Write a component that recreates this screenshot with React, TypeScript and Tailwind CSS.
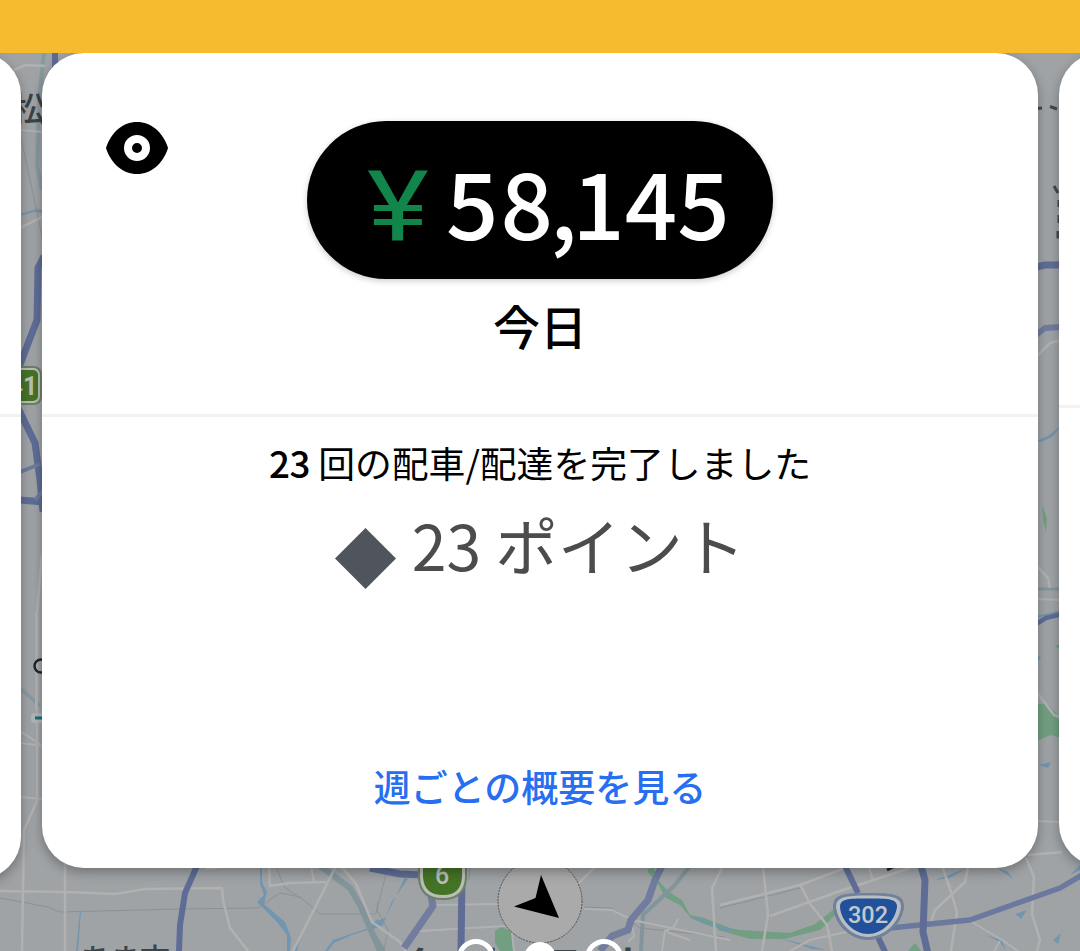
import clsx from 'clsx';

interface Road {
  d: string;
  width: number;
  color?: string;
}

const HIGHWAY = '#5f6d96';
const HIGHWAY_LIGHT = '#717c9f';

const minorRoads: Road[] = [
  // left gap
  { d: 'M14 70 L26 65 L45 66', width: 2.5 },
  { d: 'M20 130 L44 132', width: 2 },
  { d: 'M20 228 L44 216', width: 2 },
  { d: 'M42 555 L37 612 L37 801 L24 830 L22 951', width: 2.5 },
  { d: 'M36 612 V710', width: 2 },
  { d: 'M20 731 L40 744 M20 743 L44 746 M20 797 L44 799', width: 2 },
  // below the card, left part
  { d: 'M0 891 L65 892 L115 894 L145 889 L222 888 L223 900 L230 928 L248 951', width: 2.5 },
  { d: 'M65 862 V951', width: 2.5 },
  { d: 'M206 869 L234 866', width: 2 },
  { d: 'M269 866 L270 886 L290 883 L326 882', width: 2.5 },
  { d: 'M311 866 L314 882', width: 2 },
  { d: 'M336 866 L293 951', width: 2.5 },
  { d: 'M341 866 L356 884 L372 922 L400 942 L406 951', width: 2.5 },
  // middle part
  { d: 'M436 905 L498 904 M420 931 L505 926 M512 932 L514 951', width: 2 },
  { d: 'M596 866 L578 884', width: 2 },
  { d: 'M584 909 L612 910 L632 920 L730 940', width: 2 },
  { d: 'M722 868 L712 888 L714 920 L716 951', width: 2.5 },
  { d: 'M678 919 L674 927 L665 931 L662 951 M667 932 L690 940', width: 2 },
  { d: 'M632 925 L634 936 L628 942', width: 2 },
  // right part
  { d: 'M720 905 L800 885 L845 868', width: 2.5 },
  { d: 'M763 866 L768 915 L762 951', width: 2.5 },
  { d: 'M770 916 L840 891 L910 868', width: 2.5 },
  { d: 'M800 884 L810 904 L827 925 L832 951', width: 2.5 },
  { d: 'M790 951 L810 940 L850 931', width: 2 },
  { d: 'M869 868 L873 880', width: 2 },
  { d: 'M942 866 L951 892 L957 912 L951 951', width: 2.5 },
  { d: 'M968 868 L965 882 L935 910 L930 925', width: 2.5 },
  { d: 'M972 922 L1002 940 L1018 951 M1000 941 L994 951', width: 2 },
  { d: 'M1026 858 L1034 877 L1032 914 L1040 940 L1037 951', width: 2.5 },
  { d: 'M1028 855 L1062 852', width: 2.5 },
  // right gap
  { d: 'M1036 357 L1050 343 L1062 340', width: 2.5 },
  { d: 'M1036 565 L1048 578 L1050 588', width: 2.5 },
  { d: 'M1036 599 L1062 600', width: 2 },
  { d: 'M1036 691 L1054 715 L1062 718', width: 2.5 },
  { d: 'M1036 821 L1062 822', width: 2 },
];

const railways: string[] = [
  'M21 138 L45 250',
  'M0 898 L48 907 L60 912 L180 909 L258 908 L280 893 L300 897 L320 914 L376 914 L378 902',
  'M276 866 L284 887 L300 898',
  'M720 908 L800 888',
  'M388 866 L377 910 L388 930 L384 951',
  'M470 866 L469 880',
  'M584 907 L612 908 L640 928 L725 937',
];

const canals: Road[] = [
  { d: 'M44 53 L39 100 L37 165 L42 190', width: 4, color: '#879aa0' },
  { d: 'M20 688 L40 706', width: 3.5, color: '#8799a5' },
  { d: 'M320 866 L350 888 L360 905 L380 951', width: 6, color: '#82959a' },
  { d: 'M690 866 L675 885 L643 915 L641 951', width: 4, color: '#82959a' },
  { d: 'M370 928 L384 951', width: 4, color: '#82959a' },
  { d: 'M1036 589 L1062 589', width: 3, color: '#82959a' },
];

const highways: Road[] = [
  { d: 'M55 50 V75', width: 6 },
  { d: 'M44 256 L38 268 L37 320 L16 375', width: 7 },
  { d: 'M18 408 L35 443 L40 480 L43 512', width: 7 },
  { d: 'M20 500 L44 502', width: 7 },
  { d: 'M20 472 L40 464 M35 500 L44 490', width: 4, color: '#6d7b9f' },
  { d: 'M197 866 L185 893 L180 925 L179 951', width: 6 },
  { d: 'M370 868 L400 874 L422 875', width: 7 },
  { d: 'M430 890 L433 906 L404 948', width: 7, color: HIGHWAY_LIGHT },
  { d: 'M462 875 L461 951', width: 7 },
  { d: 'M662 866 L655 880 L648 900 L631 920 L628 930 L612 936 L600 951', width: 7, color: HIGHWAY_LIGHT },
  { d: 'M540 940 V951', width: 8 },
  { d: 'M845 866 L858 893 M877 935 L886 954', width: 6 },
  { d: 'M890 928 L930 924 L970 920 L1060 888 L1082 875', width: 5.5, color: '#6c799f' },
  { d: 'M921 866 L925 880 L923 932 L928 954', width: 7 },
  { d: 'M1036 267 L1045 265 L1062 265', width: 7 },
  { d: 'M1036 335 L1045 328 L1062 327', width: 6, color: HIGHWAY_LIGHT },
  { d: 'M1036 624 L1046 618 L1062 614', width: 4.5 },
];

const rivers: string[] = [
  'M20 214 L36 209 L43 210 L43 213 L34 212 L20 216 Z',
  'M260 866 L262 866 L262 882 L267 892 L264 904 L285 922 L291 938 L290 951 L287 951 L287 935 L277 922 L257 902 L264 895 L260 884 Z',
  'M80 911 L81 911 L78 951 L76 951 Z',
  'M294 951 L301 934 L297 951 Z',
  'M325 951 L333 940 L366 929 L378 919 L380 926 L352 935 L334 943 L328 951 Z',
  'M405 877 L408 879 L391 903 L383 925 L374 929 L376 922 L386 917 Z',
  'M694 917 L730 929 L730 932 L694 919 Z',
  'M720 926 L735 931 L720 929 Z',
  'M780 938 L826 950 L812 949 Z',
  'M935 880 L967 868 L950 878 Z',
  'M997 868 L1007 871 L1013 879 Z',
  'M1015 914 L1027 910 L1021 919 Z',
  'M1053 940 L1061 933 L1058 944 Z',
  'M986 935 L1002 940 L1006 951 L1000 942 Z',
  'M1036 441 L1048 436 L1062 425 L1052 437 L1041 442 Z',
  'M1036 616 L1062 610 L1062 613 L1036 618 Z',
  'M1036 653 L1041 658 L1036 662 Z',
  'M1039 765 L1051 762 L1048 768 Z',
  'M1070 875 L1080 865 L1080 870 Z',
];

const parks: string[] = [
  'M495 931 L501 927 L511 931 L513 951 L500 951 L495 943 Z',
  'M648 869 L654 868 L658 880 L669 892 L682 900 L690 915 L704 918 L735 930 L735 934 L704 924 L691 918 L680 905 L666 898 L659 886 L648 872 Z',
  'M718 926 L740 930 L790 933 L815 924 L833 910 L837 913 L820 930 L784 939 L750 939 L718 930 Z',
  'M908 951 L915 943 L921 951 Z',
  'M1042 505 L1047 518 L1046 532 L1043 520 Z',
  'M1036 704 L1047 704 L1060 717 L1060 738 L1051 735 L1036 741 Z',
  'M1055 646 L1060 644 L1060 650 Z',
];

function Lines({ roads, color }: { roads: Road[]; color: string }) {
  return (
    <g fill="none" strokeLinejoin="round">
      {roads.map((road) => (
        <path key={road.d} d={road.d} stroke={road.color ?? color} strokeWidth={road.width} />
      ))}
    </g>
  );
}

function MapBackground() {
  return (
    <svg className="absolute inset-0 h-full w-full" viewBox="0 0 1080 951" fontFamily="Noto Sans CJK JP, sans-serif">
      {parks.map((d) => (
        <path key={d} d={d} fill="#729f82" />
      ))}
      {rivers.map((d) => (
        <path key={d} d={d} fill="#7295b0" />
      ))}
      <Lines roads={canals} color="#82959a" />
      <g fill="none" stroke="#8b9195" strokeWidth="1">
        {railways.map((d) => (
          <path key={d} d={d} />
        ))}
      </g>
      <Lines roads={minorRoads} color="#b1b1b1" />
      <Lines roads={highways} color={HIGHWAY} />

      {/* Place names */}
      <g fill="#3b4248">
        <text x="12" y="121" fontSize="33" fontWeight="500">松</text>
        <text x="80" y="970" fontSize="30" fontWeight="500">あま市</text>
        <text x="404" y="982" fontSize="40" fontWeight="700" letterSpacing="28">名古屋市</text>
      </g>
      <path d="M1037 108.500 L1042 108 M1050 106.500 L1057 109 M1054 186 L1058 193 M1059 200 V207 M1059 215 V223 M1058 231 V237 L1062 237" fill="none" stroke="#45494c" strokeWidth="3" />

      {/* Stations */}
      <circle cx="41" cy="666" r="6.500" fill="none" stroke="#222526" strokeWidth="2.500" />
      <rect x="31" y="713" width="16" height="10" rx="4" fill="#b2b5b6" />
      <path d="M35 718 H47" stroke="#12707c" strokeWidth="3" />
      <path d="M887 870 L895 866" stroke="#222526" strokeWidth="3" />

      {/* Route shields */}
      <g fontFamily="Roboto, sans-serif" fontWeight="500" textAnchor="middle">
        <rect x="3" y="366" width="39" height="39" rx="8" fill="#6f8069" />
        <rect x="5" y="368" width="35" height="35" rx="6.500" fill="#b9beb9" />
        <rect x="7" y="370" width="31" height="31" rx="5" fill="#457326" />
        <text x="23" y="395" fontSize="25" fontWeight="700" fill="#b9beb9">41</text>

        <path d="M418 850 H467 V878 Q466 900 443 900 Q419 900 418 878 Z" fill="#6f8069" />
        <path d="M420 850 H465 V877 Q464 898 443 898 Q421 898 420 877 Z" fill="#b9beb9" />
        <path d="M423 850 H462 V877 Q461 895 443 895 Q424 895 423 877 Z" fill="#457326" />
        <text x="442" y="884" fontSize="25" fill="#b9beb9">6</text>

        <path d="M868 893 C894 893 904 894 904 907 C902 924 886 940 868 940 C850 940 834 924 833 907 C833 894 843 893 868 893 Z" fill="#71809b" />
        <path d="M868 895.500 C892 895.500 901 897 901 907 C899 923 884 937 868 937 C852 937 838 923 836 907 C836 897 845 895.500 868 895.500 Z" fill="#b9bec3" />
        <path d="M868 898.500 C890 898.500 897 899 897 907 C895 921 882 934 868 934 C854 934 841 921 840 907 C840 899 847 898.500 868 898.500 Z" fill="#20519a" />
        <text x="868" y="923" fontSize="23.500" fill="#c3c8cf">302</text>
      </g>

      {/* Current location */}
      <circle cx="540" cy="901" r="42" fill="#aaaaaa" stroke="#505050" strokeWidth="1" strokeDasharray="2 1" />
      <path d="M541 875 L559 918 L514 906.500 L535.500 898 Z" fill="#000" />
    </svg>
  );
}

interface CardProps {
  className: string;
  children?: React.ReactNode;
}

function Card({ className, children }: CardProps) {
  return (
    <section
      className={clsx(
        'w-[996px] shrink-0 rounded-[42px] bg-white shadow-[0_4px_12px_rgba(0,0,0,0.3)]',
        className,
      )}
    >
      {children}
    </section>
  );
}

function EyeIcon() {
  return (
    <svg width="62" height="52" viewBox="0 0 62 52">
      <path d="M0 26 C5 10 17 0 31 0 C45 0 57 10 62 26 C57 42 45 52 31 52 C17 52 5 42 0 26 Z" />
      <circle cx="31" cy="26" r="9" fill="none" stroke="#fff" strokeWidth="8" />
    </svg>
  );
}

function EarningsPill() {
  return (
    <div className="flex h-[158px] w-[466px] rounded-full bg-black pl-[60px] leading-[158px] shadow-[0_2px_6px_rgba(0,0,0,0.2)]">
      <span className="mt-[7px] w-[79px] origin-left scale-x-120 font-['Roboto'] text-[98px] text-[#12854a]">¥</span>
      <span className="text-[92px] font-medium text-white">
        <span className="tracking-[2px]">5</span>
        <span className="tracking-[-3px]">8</span>
        <span className="tracking-[-5px]">,</span>145
      </span>
    </div>
  );
}

export default function App() {
  return (
    <div className="relative h-[951px] w-[1080px] overflow-hidden bg-[#9fa3a6] font-['Noto_Sans_CJK_JP',sans-serif] text-black">
      <MapBackground />

      <div className="relative">
        <header className="relative h-[53px] bg-[#f7bb30]" />

        <main className="flex items-start justify-center gap-[21px]">
          <Card className="h-[826px] pt-[361px]">
            <hr className="border-t-3 border-[#f2f2f2]" />
          </Card>

          <Card className="flex h-[815px] flex-col">
            <div className="grid h-[361px] grid-cols-[265px_466px_265px] pt-[68px]">
              <button className="ml-[64px] self-start pt-px">
                <EyeIcon />
              </button>
              <div className="flex flex-col items-center">
                <EarningsPill />
                <h1 className="mt-[13px] text-[47px] leading-[66px] font-medium">今日</h1>
              </div>
            </div>
            <hr className="border-t-3 border-[#f2f2f2]" />
            <p className="mt-[18px] text-center text-[36.8px] leading-[54px] whitespace-pre">
              <span className="font-medium tracking-[-0.5px]">23</span> 回の配車/配達を完了しました
            </p>
            <div className="mt-[13px] flex h-[94px] justify-center">
              <svg className="mt-[26px] mr-[16px] shrink-0" width="61" height="61" viewBox="0 0 61 61">
                <path d="M30.500 0 L61 30.500 L30.500 61 L0 30.500 Z" fill="#4f545d" />
              </svg>
              <p className="-mt-[5px] text-[62.5px] leading-[94px] whitespace-pre text-[#4c4c4c]">23 ポイント</p>
            </div>
            <a className="mt-auto mb-[55px] text-center text-[37px] leading-[54px] font-medium text-[#276ef1]">
              週ごとの概要を見る
            </a>
          </Card>

          <Card className="h-[813px] pt-[352px]">
            <hr className="border-t-3 border-[#f2f2f2]" />
          </Card>
        </main>
      </div>

      {/* Page dots */}
      <div className="absolute top-[939px] left-[457px] flex items-center gap-[29px]">
        <span className="size-[38px] rounded-full border-5 border-white" />
        <span className="size-[32px] rounded-full bg-white" />
        <span className="size-[38px] rounded-full border-5 border-white" />
      </div>
    </div>
  );
}
